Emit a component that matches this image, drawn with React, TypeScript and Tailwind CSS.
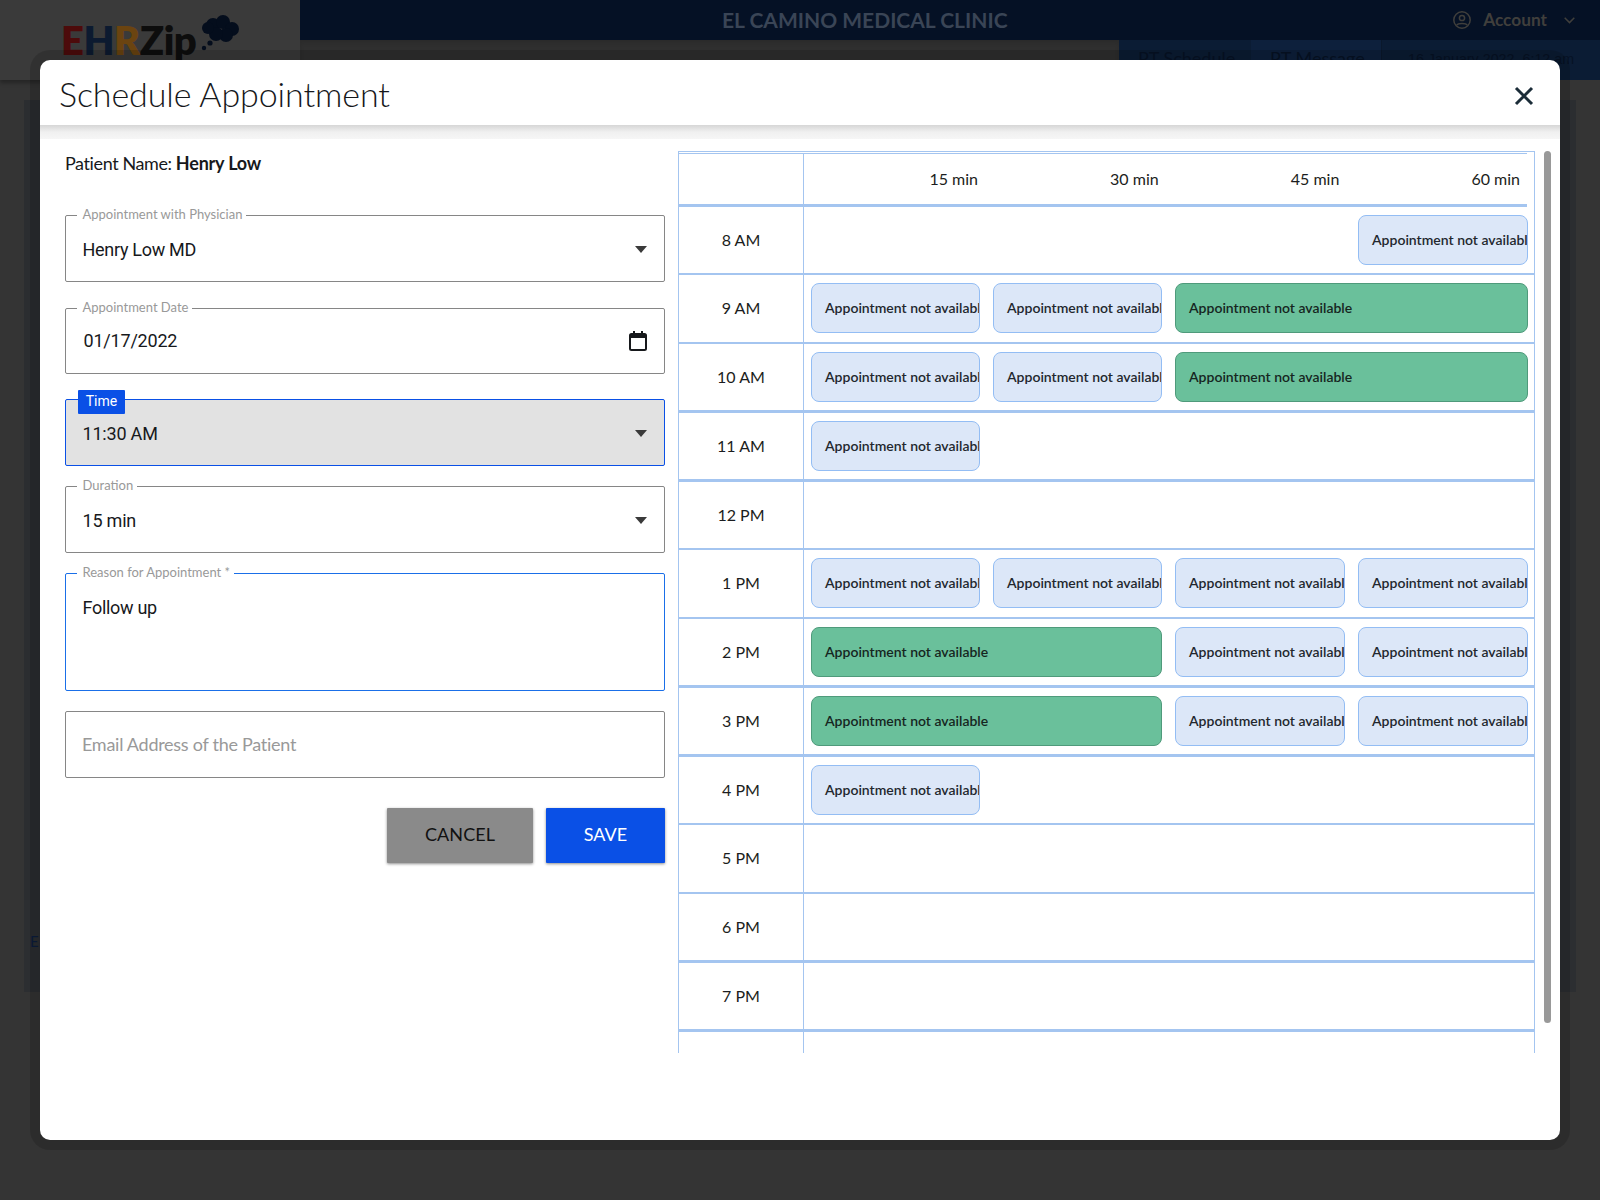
import React from "react";

type Slot = "b" | "g" | "x";
const ROWS: { label: string; h: string; line: string; slots: Slot[] }[] = [
  { label: "8 AM", h: "h-[68px]", line: "border-b-2", slots: ["x", "x", "x", "b"] },
  { label: "9 AM", h: "h-[69px]", line: "border-b-2", slots: ["b", "b", "g"] },
  { label: "10 AM", h: "h-[69px]", line: "border-b-[3px]", slots: ["b", "b", "g"] },
  { label: "11 AM", h: "h-[69px]", line: "border-b-[3px]", slots: ["b"] },
  { label: "12 PM", h: "h-[68px]", line: "border-b-2", slots: [] },
  { label: "1 PM", h: "h-[69px]", line: "border-b-2", slots: ["b", "b", "b", "b"] },
  { label: "2 PM", h: "h-[69px]", line: "border-b-[3px]", slots: ["g", "b", "b"] },
  { label: "3 PM", h: "h-[69px]", line: "border-b-[3px]", slots: ["g", "b", "b"] },
  { label: "4 PM", h: "h-[68px]", line: "border-b-2", slots: ["b"] },
  { label: "5 PM", h: "h-[69px]", line: "border-b-2", slots: [] },
  { label: "6 PM", h: "h-[69px]", line: "border-b-[3px]", slots: [] },
  { label: "7 PM", h: "h-[69px]", line: "border-b-[3px]", slots: [] },
];

const Arrow = () => (
  <svg width="12" height="7" viewBox="0 0 12 7" className="shrink-0 mr-[1px]">
    <path d="M0 0h12L6 7z" fill="#3a3a3a" />
  </svg>
);

const Legend = ({ children }: { children: React.ReactNode }) => (
  <span className="absolute left-[11px] top-[-10px] bg-white pl-[5.5px] pr-[4px] text-[13px] leading-[16px] tracking-normal text-[#999999] whitespace-nowrap [font-family:Lato,sans-serif]">
    {children}
  </span>
);

function Slots({ slots }: { slots: Slot[] }) {
  return (
    <div className="flex-1 grid grid-cols-[169px_169px_170px_170px] gap-x-[13px] pl-[7px] pt-[8px] items-start">
      {slots.map((s, i) =>
        s === "x" ? (
          <div key={i} />
        ) : s === "b" ? (
          <div
            key={i}
            className="h-[50px] flex items-center overflow-hidden whitespace-nowrap rounded-[8px] border border-[#93bdf4] bg-[#dce7f8] pb-[1px] pl-[13px] text-[14px] font-semibold text-[#23272e]"
          >
            Appointment not available
          </div>
        ) : (
          <div
            key={i}
            className="col-span-2 h-[50px] flex items-center overflow-hidden whitespace-nowrap rounded-[8px] border border-[#4f9a7b] bg-[#6ac09b] pb-[1px] pl-[13px] text-[14px] font-semibold text-[#16261f]"
          >
            Appointment not available
          </div>
        )
      )}
    </div>
  );
}

export default function App() {
  return (
    <div className="relative h-[1200px] w-full overflow-hidden bg-[#343434] [font-family:Lato,sans-serif]">
      {/* Page behind the dialog */}
      <div className="flex h-[80px]">
        <div className="w-[300px] shrink-0 bg-[#3a3a3a] pl-[61px] pt-[16px] flex items-start shadow-[0_3px_4px_rgba(0,0,0,0.3)]">
          <span className="text-[40px] leading-[48px] font-extrabold tracking-[-0.5px]">
            <span className="text-[#4d0b0b]">E</span>
            <span className="text-[#0c1a30]">H</span>
            <span className="text-[#6b4410]">R</span>
            <span className="text-[#0d0d0d]">Zip</span>
          </span>
          <svg width="42" height="38" viewBox="0 0 42 38" className="ml-[3px] mt-[-1px]" fill="#040d1c">
            <circle cx="14" cy="10" r="7" />
            <circle cx="24" cy="7" r="7" />
            <circle cx="33" cy="14" r="7" />
            <circle cx="27" cy="20" r="7" />
            <circle cx="17" cy="19" r="7" />
            <circle cx="9" cy="13" r="6" />
            <circle cx="11" cy="28" r="2.6" />
            <circle cx="5" cy="33" r="2.2" />
          </svg>
        </div>
        <div className="flex-1 flex flex-col">
          <div className="h-[40px] bg-[#051125] flex items-center relative">
            <span className="w-full pl-[422px] text-[21px] font-bold text-[#3a4556] whitespace-nowrap">
              EL CAMINO MEDICAL CLINIC
            </span>
            <div className="absolute right-[25px] top-0 h-full flex items-center text-[#403f3c]">
              <svg width="18" height="18" viewBox="0 0 18 18" fill="none" stroke="currentColor" strokeWidth="1.5">
                <circle cx="9" cy="9" r="8.2" />
                <circle cx="9" cy="7" r="2.6" />
                <path d="M3.8 14.2C5 11.8 13 11.8 14.2 14.2" />
              </svg>
              <span className="ml-[12px] text-[17.3px] font-bold">Account</span>
              <svg width="11" height="7" viewBox="0 0 11 7" fill="none" stroke="currentColor" strokeWidth="1.5" className="ml-[17px]">
                <path d="M.7.8l4.8 4.8L10.3.8" />
              </svg>
            </div>
          </div>
          <div className="h-[40px] flex">
            <div className="w-[819px] bg-[#2f2f2f] shadow-[inset_0_3px_4px_rgba(0,0,0,0.1)]" />
            <div className="flex-1 flex bg-[#0b1c34] text-[18px] text-[#061225] whitespace-nowrap">
              <div className="w-[132px] pl-[19px] pt-[5px]">PT Schedule</div>
              <div className="w-[131px] pl-[19px] pt-[5px] bg-[#0d203c] border-r border-[#0a182c]">PT Message</div>
              <div className="flex-1 pl-[26px] pt-[9px] text-[14.3px] [font-family:'Liberation_Sans',sans-serif]">16 January 2022, 6:12 am</div>
            </div>
          </div>
        </div>
      </div>
      <div className="mx-[24px] mt-[20px] h-[800px] border-x-[16px] border-[#2b2d30]" />
      <div className="mx-[24px] h-[92px] bg-[#2c2e31] pl-[6px] pt-[30px] text-[15px] text-[#0b1d3d]">EHRZip</div>

      {/* Dialog */}
      <div className="absolute left-[40px] top-[60px] z-20 flex h-[1080px] w-[1520px] flex-col rounded-[10px] bg-white shadow-[0_0_0_10px_rgba(0,0,0,0.14)]">
        <div className="flex h-[65px] shrink-0 items-center justify-between rounded-t-[10px] pl-[19px] pr-[26px]">
          <span className="mt-[2px] text-[34px] font-light leading-[65px] tracking-[-0.1px] text-[#16181b]">Schedule Appointment</span>
          <svg width="20" height="20" viewBox="0 0 20 20" className="mt-[7px]">
            <path d="M2 2l16 16M18 2L2 18" stroke="#1b2c38" strokeWidth="3" />
          </svg>
        </div>
        <div className="h-[14px] shrink-0 bg-gradient-to-b from-[#d6d6d6] via-[#f0f0f0] to-[#f6f6f6]" />

        <div className="flex flex-1 items-start">
          {/* Form */}
          <div className="ml-[25px] flex w-[600px] shrink-0 flex-col text-[18px] text-[#17191c]">
            <div className="mt-[11px] h-[27px] leading-[27px] tracking-[-0.4px]">
              Patient Name: <span className="font-bold tracking-[-0.2px]">Henry Low</span>
            </div>
            <div className="relative mt-[38px] flex h-[67px] items-center justify-between rounded-[2px] border border-[#868686] pl-[16.5px] pr-[16px] pt-[2px] tracking-[-0.3px] [font-family:Roboto,sans-serif]">
              <Legend>Appointment with Physician</Legend>
              <span>Henry Low MD</span>
              <Arrow />
            </div>
            <div className="relative mt-[26px] flex h-[66px] items-center justify-between rounded-[2px] border border-[#868686] pb-[1px] pl-[17.5px] pr-[17px] tracking-[-0.2px] [font-family:Roboto,sans-serif]">
              <Legend>Appointment Date</Legend>
              <span>01/17/2022</span>
              <svg width="18" height="20" viewBox="0 0 18 20" fill="none">
                <rect x="1" y="3" width="16" height="16" rx="1.5" stroke="#17191c" strokeWidth="2" />
                <rect x="1" y="3" width="16" height="4" fill="#17191c" />
                <path d="M5 0v4M13 0v4" stroke="#17191c" strokeWidth="2" />
              </svg>
            </div>
            <div className="relative mt-[25px] flex h-[67px] items-center justify-between rounded-[2px] border border-[#0a50e6] bg-[#e2e2e2] pl-[16.5px] pr-[16px] pt-[1px] tracking-[-0.2px] [font-family:Roboto,sans-serif]">
              <span className="absolute left-[12px] top-[-10px] flex h-[24px] w-[47px] items-center justify-center rounded-[1px] bg-[#0a50e6] pb-[1px] text-[14px] tracking-normal text-white">
                Time
              </span>
              <span>11:30 AM</span>
              <Arrow />
            </div>
            <div className="relative mt-[20px] flex h-[67px] items-center justify-between rounded-[2px] border border-[#868686] pl-[16.5px] pr-[16px] pt-[2px] tracking-[-0.2px] [font-family:Roboto,sans-serif]">
              <Legend>Duration</Legend>
              <span>15 min</span>
              <Arrow />
            </div>
            <div className="relative mt-[20px] h-[118px] rounded-[2px] border border-[#1a6fe8] pl-[16.5px] pt-[20px] leading-[27px] tracking-[-0.3px] [font-family:Roboto,sans-serif]">
              <Legend>Reason for Appointment *</Legend>
              Follow up
            </div>
            <div className="mt-[20px] flex h-[67px] items-center rounded-[2px] border border-[#868686] pl-[16px] text-[#999999] tracking-[-0.27px]">
              Email Address of the Patient
            </div>
            <div className="mt-[30px] flex justify-end gap-[13px]">
              <div className="flex h-[55px] w-[146px] items-center justify-center rounded-[1px] bg-[#8a8a8a] pb-[3px] tracking-[0.1px] text-[#111111] shadow-[0_1px_3px_rgba(0,0,0,0.45)]">
                CANCEL
              </div>
              <div className="flex h-[55px] w-[119px] items-center justify-center rounded-[1px] bg-[#0a50e6] pb-[3px] text-white shadow-[0_1px_3px_rgba(0,0,0,0.45)]">
                SAVE
              </div>
            </div>
          </div>

          {/* Schedule */}
          <div className="ml-[13px] mt-[12px] h-[902px] w-[857px] shrink-0 overflow-hidden border-x border-t border-[#a4c5f0] text-[16px] text-[#1b1d20]">
            <div className="mr-[7px] mt-[1px] flex h-[54px] border-t border-b-[3px] border-[#a4c5f0]">
              <div className="w-[125px] shrink-0 border-r border-[#a4c5f0]" />
              <div className="grid flex-1 grid-cols-[174px_repeat(3,1fr)] items-center pr-[7px] text-right">
                <span>15 min</span>
                <span>30 min</span>
                <span>45 min</span>
                <span>60 min</span>
              </div>
            </div>
            {ROWS.map((r) => (
              <div key={r.label} className={`flex ${r.h} ${r.line} border-[#a4c5f0]`}>
                <div className="flex w-[125px] shrink-0 items-center justify-center border-r border-[#a4c5f0] pb-[1px]">
                  {r.label}
                </div>
                <Slots slots={r.slots} />
              </div>
            ))}
            <div className="flex h-[30px]">
              <div className="w-[125px] shrink-0 border-r border-[#a4c5f0]" />
            </div>
          </div>
          <div className="ml-[9px] mt-[12px] h-[872px] w-[7px] shrink-0 rounded-full bg-[#999999]" />
        </div>
      </div>
    </div>
  );
}
